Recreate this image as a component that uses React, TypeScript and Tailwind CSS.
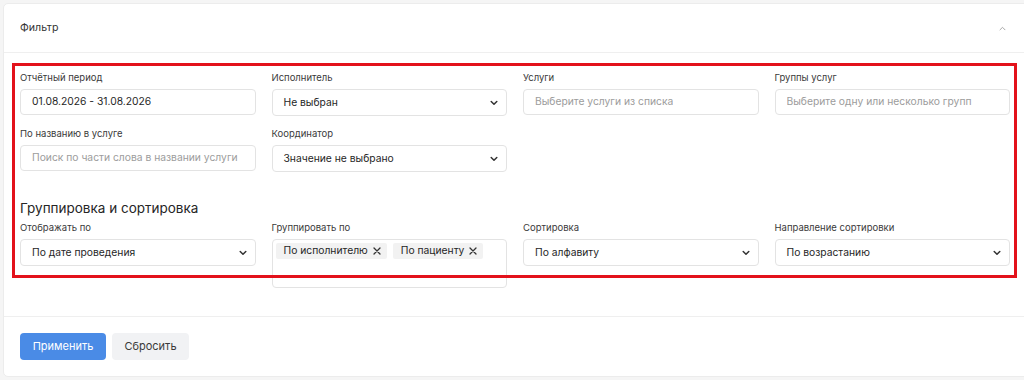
import React from "react";

function ChevronDown() {
  return (
    <svg width="8" height="6" viewBox="0 0 8 6" className="shrink-0">
      <path d="M1.2 1.5 L4 4.3 L6.8 1.5" fill="none" stroke="#333" strokeWidth="1.5" strokeLinecap="round" strokeLinejoin="round" />
    </svg>
  );
}

function Field({ label, children }: { label: string; children: React.ReactNode }) {
  return (
    <div className="flex flex-col">
      <div className="text-[9.5px] leading-[14px] text-[#3a3a3a] mb-[4px]">{label}</div>
      {children}
    </div>
  );
}

function TextBox({ value, placeholder }: { value?: string; placeholder?: string }) {
  return (
    <div className="h-[26px] border border-[#e3e3e3] rounded-[4px] px-[11px] flex items-center text-[10.3px]">
      {value ? (
        <span className="text-[#262626]">{value}</span>
      ) : (
        <span className="text-[#9c9c9c] whitespace-nowrap overflow-hidden">{placeholder}</span>
      )}
    </div>
  );
}

function Select({ value }: { value: string }) {
  return (
    <div className="h-[27px] border border-[#e3e3e3] rounded-[4px] pl-[11px] pr-[8px] flex items-center justify-between text-[10.3px] text-[#262626]">
      <span>{value}</span>
      <ChevronDown />
    </div>
  );
}

function Chip({ label }: { label: string }) {
  return (
    <div className="h-[16px] bg-[#f2f2f2] rounded-[2px] pl-[8px] pr-[6px] flex items-center gap-[5px] text-[10.3px] text-[#262626]">
      <span>{label}</span>
      <svg width="8" height="8" viewBox="0 0 8 8">
        <path d="M1 1 L7 7 M7 1 L1 7" stroke="#333" strokeWidth="1.3" strokeLinecap="round" />
      </svg>
    </div>
  );
}

export default function App() {
  return (
    <div
      className="relative h-[380px] w-[1024px] overflow-hidden bg-[#f5f5f5] pt-[3px] pl-[3px]"
      style={{ fontFamily: "Inter, 'Noto Sans', sans-serif" }}
    >
      <div className="w-[1030px] bg-white border border-[#ececec] rounded-[5px]">
        {/* Header */}
        <div className="h-[49px] pl-[16px] pr-[26px] flex items-center justify-between border-b border-[#efefef]">
          <span className="text-[10.6px] text-[#333]">Фильтр</span>
          <svg width="7" height="5" viewBox="0 0 7 5">
            <path d="M1 3.8 L3.5 1.3 L6 3.8" fill="none" stroke="#a8a8a8" strokeWidth="1" strokeLinecap="round" />
          </svg>
        </div>

        {/* Body */}
        <div className="pl-[16px] pt-[18px] pb-[28px] border-b border-[#efefef]">
          <div className="w-[990px] grid grid-cols-4 gap-x-[16px] gap-y-[11px] items-start">
            <Field label="Отчётный период">
              <TextBox value="01.08.2026 - 31.08.2026" />
            </Field>
            <Field label="Исполнитель">
              <Select value="Не выбран" />
            </Field>
            <Field label="Услуги">
              <TextBox placeholder="Выберите услуги из списка" />
            </Field>
            <Field label="Группы услуг">
              <TextBox placeholder="Выберите одну или несколько групп" />
            </Field>
            <Field label="По названию в услуге">
              <TextBox placeholder="Поиск по части слова в названии услуги" />
            </Field>
            <Field label="Координатор">
              <Select value="Значение не выбрано" />
            </Field>
          </div>

          <div className="mt-[26px] text-[13.5px] leading-[20px] text-[#262626]">Группировка и сортировка</div>

          <div className="w-[990px] grid grid-cols-4 gap-x-[16px] items-start mt-[3px]">
            <Field label="Отображать по">
              <Select value="По дате проведения" />
            </Field>
            <Field label="Группировать по">
              <div className="h-[49px] border border-[#e3e3e3] rounded-[4px] p-[3px] flex items-start gap-[6px]">
                <Chip label="По исполнителю" />
                <Chip label="По пациенту" />
              </div>
            </Field>
            <Field label="Сортировка">
              <Select value="По алфавиту" />
            </Field>
            <Field label="Направление сортировки">
              <Select value="По возрастанию" />
            </Field>
          </div>
        </div>

        {/* Footer */}
        <div className="pl-[16px] pt-[16px] pb-[16px] flex gap-[6px]">
          <button className="h-[27px] w-[86px] rounded-[4px] bg-[#4a8be6] text-white text-[11px]">Применить</button>
          <button className="h-[27px] w-[77px] rounded-[4px] bg-[#f1f2f4] text-[#3a3a3a] text-[11px]">Сбросить</button>
        </div>
      </div>

      {/* annotation frame */}
      <div className="absolute left-[12px] top-[63px] w-[1005px] h-[215px] border-[3px] border-[#e3121b]" />
    </div>
  );
}
